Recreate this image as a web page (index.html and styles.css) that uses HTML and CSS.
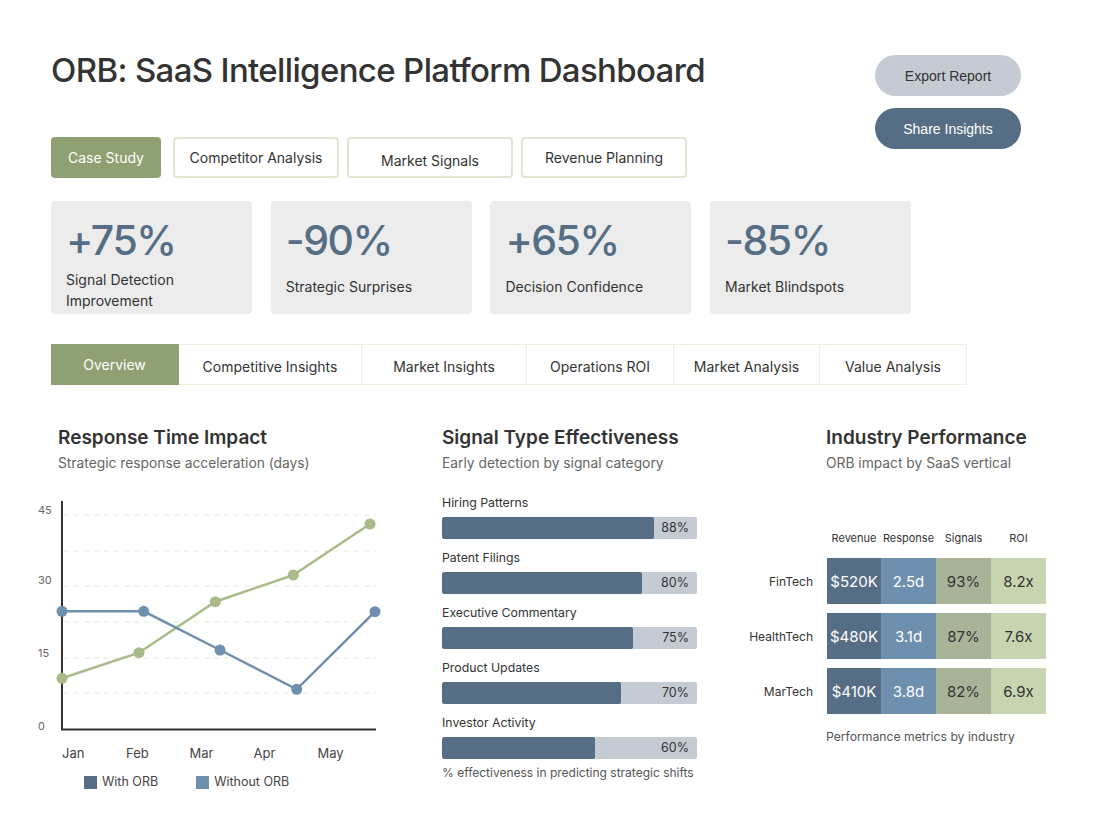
FILE: index.html
```html
<!DOCTYPE html>
<html lang="en">
<head>
<meta charset="utf-8">
<title>ORB: SaaS Intelligence Platform Dashboard</title>
<link rel="stylesheet" href="styles.css">
</head>
<body>
<div class="page">
  <header class="header">
    <div class="header-main">
      <h1 class="title">ORB: SaaS Intelligence Platform Dashboard</h1>
      <div class="pills">
        <button class="pill pill-active">Case Study</button>
        <button class="pill pill-wide">Competitor Analysis</button>
        <button class="pill pill-wide pill-low">Market Signals</button>
        <button class="pill pill-wide">Revenue Planning</button>
      </div>
    </div>
    <div class="actions">
      <button class="action action-light">Export Report</button>
      <button class="action action-dark">Share Insights</button>
    </div>
  </header>

  <section class="kpis">
    <div class="kpi">
      <div class="kpi-value">+75%</div>
      <div class="kpi-label">Signal Detection<br>Improvement</div>
    </div>
    <div class="kpi">
      <div class="kpi-value">-90%</div>
      <div class="kpi-label">Strategic Surprises</div>
    </div>
    <div class="kpi">
      <div class="kpi-value">+65%</div>
      <div class="kpi-label">Decision Confidence</div>
    </div>
    <div class="kpi">
      <div class="kpi-value">-85%</div>
      <div class="kpi-label">Market Blindspots</div>
    </div>
  </section>

  <nav class="tabs">
    <div class="tab tab-active tab-overview">Overview</div>
    <div class="tab tab-competitive">Competitive Insights</div>
    <div class="tab tab-market">Market Insights</div>
    <div class="tab tab-ops">Operations ROI</div>
    <div class="tab tab-analysis">Market Analysis</div>
    <div class="tab tab-value">Value Analysis</div>
  </nav>

  <main class="panels">
    <section class="panel">
      <h2 class="panel-title">Response Time Impact</h2>
      <p class="panel-sub">Strategic response acceleration (days)</p>
      <svg class="line-chart" width="370" height="272" viewBox="0 0 370 272">
        <g class="grid">
          <line x1="34" y1="20" x2="346" y2="20"/>
          <line x1="34" y1="56" x2="346" y2="56"/>
          <line x1="34" y1="91" x2="346" y2="91"/>
          <line x1="34" y1="127" x2="346" y2="127"/>
          <line x1="34" y1="163" x2="346" y2="163"/>
          <line x1="34" y1="198" x2="346" y2="198"/>
        </g>
        <g class="y-labels">
          <text x="8" y="19">45</text>
          <text x="8" y="89">30</text>
          <text x="8" y="162">15</text>
          <text x="8" y="235">0</text>
        </g>
        <line class="axis" x1="32" y1="6" x2="32" y2="235"/>
        <line class="axis" x1="31" y1="234.5" x2="346" y2="234.5"/>
        <polyline class="series-green" points="32,183.3 109,157.7 185.3,106.7 263.3,80 340,29"/>
        <polyline class="series-blue" points="32,116.3 113.7,116.3 190,155 266.7,194.3 345,116.7"/>
        <g class="dots-green">
          <circle cx="32" cy="183.3" r="5.5"/>
          <circle cx="109" cy="157.7" r="5.5"/>
          <circle cx="185.3" cy="106.7" r="5.5"/>
          <circle cx="263.3" cy="80" r="5.5"/>
          <circle cx="340" cy="29" r="5.5"/>
        </g>
        <g class="dots-blue">
          <circle cx="32" cy="116.3" r="5.5"/>
          <circle cx="113.7" cy="116.3" r="5.5"/>
          <circle cx="190" cy="155" r="5.5"/>
          <circle cx="266.7" cy="194.3" r="5.5"/>
          <circle cx="345" cy="116.7" r="5.5"/>
        </g>
        <g class="x-labels">
          <text x="32" y="263">Jan</text>
          <text x="96" y="263">Feb</text>
          <text x="159.5" y="263">Mar</text>
          <text x="223.5" y="263">Apr</text>
          <text x="287.5" y="263">May</text>
        </g>
      </svg>
      <div class="legend">
        <span class="legend-item"><span class="swatch swatch-dark"></span>With ORB</span>
        <span class="legend-item"><span class="swatch swatch-light"></span>Without ORB</span>
      </div>
    </section>

    <section class="panel">
      <h2 class="panel-title">Signal Type Effectiveness</h2>
      <p class="panel-sub">Early detection by signal category</p>
      <div class="bars">
        <div class="bar-row">
          <div class="bar-label">Hiring Patterns</div>
          <div class="bar-track"><div class="bar-fill" style="width:83.2%"></div><span class="bar-value">88%</span></div>
        </div>
        <div class="bar-row">
          <div class="bar-label">Patent Filings</div>
          <div class="bar-track"><div class="bar-fill" style="width:78.4%"></div><span class="bar-value">80%</span></div>
        </div>
        <div class="bar-row">
          <div class="bar-label">Executive Commentary</div>
          <div class="bar-track"><div class="bar-fill" style="width:75%"></div><span class="bar-value">75%</span></div>
        </div>
        <div class="bar-row">
          <div class="bar-label">Product Updates</div>
          <div class="bar-track"><div class="bar-fill" style="width:70%"></div><span class="bar-value">70%</span></div>
        </div>
        <div class="bar-row">
          <div class="bar-label">Investor Activity</div>
          <div class="bar-track"><div class="bar-fill" style="width:60%"></div><span class="bar-value">60%</span></div>
        </div>
      </div>
      <p class="note">% effectiveness in predicting strategic shifts</p>
    </section>

    <section class="panel">
      <h2 class="panel-title">Industry Performance</h2>
      <p class="panel-sub">ORB impact by SaaS vertical</p>
      <div class="matrix">
        <div class="m-head"></div>
        <div class="m-head">Revenue</div>
        <div class="m-head">Response</div>
        <div class="m-head">Signals</div>
        <div class="m-head">ROI</div>

        <div class="m-label">FinTech</div>
        <div class="m-cell c1">$520K</div>
        <div class="m-cell c2">2.5d</div>
        <div class="m-cell c3">93%</div>
        <div class="m-cell c4">8.2x</div>

        <div class="m-label">HealthTech</div>
        <div class="m-cell c1">$480K</div>
        <div class="m-cell c2">3.1d</div>
        <div class="m-cell c3">87%</div>
        <div class="m-cell c4">7.6x</div>

        <div class="m-label">MarTech</div>
        <div class="m-cell c1">$410K</div>
        <div class="m-cell c2">3.8d</div>
        <div class="m-cell c3">82%</div>
        <div class="m-cell c4">6.9x</div>
      </div>
      <p class="note note-matrix">Performance metrics by industry</p>
    </section>
  </main>
</div>
</body>
</html>
```

FILE: styles.css
```css
* { box-sizing: border-box; }

html, body {
  margin: 0;
  padding: 0;
  background: #ffffff;
}

body {
  font-family: Inter, "Noto Sans", sans-serif;
  color: #333333;
}

.page {
  width: 1098px;
  padding: 50px 77px 0 51px;
}

/* Header */
.header {
  display: flex;
  justify-content: space-between;
  align-items: flex-start;
}

.title {
  margin: 0;
  font-size: 33px;
  line-height: 40px;
  font-weight: 500;
  letter-spacing: -0.65px;
  color: #333333;
  white-space: nowrap;
}

.pills {
  display: flex;
  margin-top: 47px;
}

.pill {
  height: 41px;
  border: 2px solid #dde7d0;
  border-radius: 4px;
  background: #ffffff;
  font-family: Inter, sans-serif;
  font-size: 14px;
  color: #333333;
  padding: 0;
  margin-right: 8px;
}

.pill-active {
  width: 110px;
  background: #8fa172;
  border-color: #8fa172;
  color: #ffffff;
  margin-right: 12px;
}

.pill-wide { width: 166px; }

.pill-low { padding-top: 5px; }

.actions {
  display: flex;
  flex-direction: column;
  gap: 12px;
  margin-top: 5px;
}

.action {
  width: 146px;
  height: 41px;
  border: none;
  border-radius: 21px;
  font-family: "Liberation Sans", Arial, sans-serif;
  font-size: 14px;
}

.action-light { background: #c5cbd3; color: #333333; }
.action-dark { background: #566e85; color: #ffffff; }

/* KPI cards */
.kpis {
  display: grid;
  grid-template-columns: repeat(4, 201px);
  column-gap: 18.7px;
  margin-top: 23px;
}

.kpi {
  height: 113px;
  background: #ececec;
  border-radius: 4px;
  padding: 14px 15px 0 15px;
}

.kpi-value {
  font-size: 41px;
  line-height: 50px;
  font-weight: 500;
  letter-spacing: -1.5px;
  color: #566e85;
}

.kpi-label {
  margin-top: 3.5px;
  min-height: 36px;
  display: flex;
  align-items: center;
  font-size: 14px;
  line-height: 21px;
  color: #333333;
}

/* Tabs */
.tabs {
  display: flex;
  margin-top: 30px;
  height: 41px;
}

.tab {
  display: flex;
  align-items: center;
  justify-content: center;
  height: 41px;
  padding-top: 4px;
  border: 1px solid #eef0e2;
  border-left: none;
  font-size: 14px;
  color: #333333;
}

.tab-active {
  background: #8fa172;
  border-color: #8fa172;
  color: #ffffff;
  padding-top: 0;
}

.tab-overview { width: 128px; }
.tab-competitive { width: 183px; }
.tab-market { width: 165px; }
.tab-ops { width: 147px; }
.tab-analysis { width: 146px; }
.tab-value { width: 147px; }

/* Panels */
.panels {
  display: grid;
  grid-template-columns: 384px 384px 260px;
  margin-top: 41px;
  padding-left: 7px;
}

.panel-title {
  margin: 0;
  font-size: 19px;
  line-height: 24px;
  font-weight: 600;
  color: #333333;
  white-space: nowrap;
}

.panel-sub {
  margin: 3px 0 0 0;
  font-size: 13.8px;
  line-height: 20px;
  color: #666666;
  white-space: nowrap;
}

/* Line chart */
.line-chart {
  display: block;
  margin: 22px 0 0 -28px;
  overflow: visible;
}

.grid line {
  stroke: #e7ebd6;
  stroke-width: 1;
  stroke-dasharray: 5 5;
}

.axis {
  stroke: #333333;
  stroke-width: 2;
}

.y-labels text {
  font-family: Inter, sans-serif;
  font-size: 11px;
  fill: #666666;
}

.x-labels text {
  font-family: Inter, sans-serif;
  font-size: 13px;
  fill: #444444;
}

.series-green {
  fill: none;
  stroke: #a9bb8b;
  stroke-width: 2.5;
}

.series-blue {
  fill: none;
  stroke: #6f8fae;
  stroke-width: 2.5;
}

.dots-green circle { fill: #a9bb8b; }
.dots-blue circle { fill: #6f8fae; }

.legend {
  display: flex;
  gap: 38px;
  margin: 7px 0 0 26px;
  font-size: 12.5px;
  line-height: 16px;
  color: #444444;
}

.legend-item {
  display: flex;
  align-items: center;
  gap: 5px;
}

.swatch {
  width: 13px;
  height: 13px;
  display: inline-block;
}

.swatch-dark { background: #566e85; }
.swatch-light { background: #6f8fae; }

/* Bars */
.bars {
  margin-top: 22px;
  width: 255px;
}

.bar-row { margin-bottom: 11px; }

.bar-label {
  font-size: 12.3px;
  line-height: 16px;
  color: #333333;
}

.bar-track {
  position: relative;
  margin-top: 6px;
  height: 22px;
  background: #c5cbd3;
  border-radius: 2px;
  overflow: hidden;
}

.bar-fill {
  height: 100%;
  background: #566e85;
  border-radius: 2px;
}

.bar-value {
  position: absolute;
  right: 8px;
  top: 0;
  line-height: 22px;
  font-size: 12.5px;
  color: #333333;
}

.note {
  margin: -5px 0 0 0;
  font-size: 12px;
  line-height: 16px;
  color: #555555;
  white-space: nowrap;
}

/* Matrix */
.matrix {
  display: grid;
  grid-template-columns: 85px 54px 55px 55px 55px;
  grid-auto-rows: 46px;
  grid-template-rows: 16px;
  row-gap: 9px;
  margin: 60px 0 0 -84px;
}

.m-head {
  font-size: 11px;
  line-height: 16px;
  text-align: center;
  color: #333333;
  margin-top: -3px;
}

.m-label {
  display: flex;
  align-items: center;
  justify-content: flex-end;
  padding-right: 14px;
  font-size: 12px;
  color: #333333;
}

.m-cell {
  display: flex;
  align-items: center;
  justify-content: center;
  font-size: 15px;
}

.c1 { background: #566e85; color: #ffffff; }
.c2 { background: #6f8fae; color: #ffffff; }
.c3 { background: #a8b398; color: #333333; }
.c4 { background: #c8d5b1; color: #333333; }

.note-matrix {
  margin-top: 15px;
  font-size: 12.2px;
}
```
